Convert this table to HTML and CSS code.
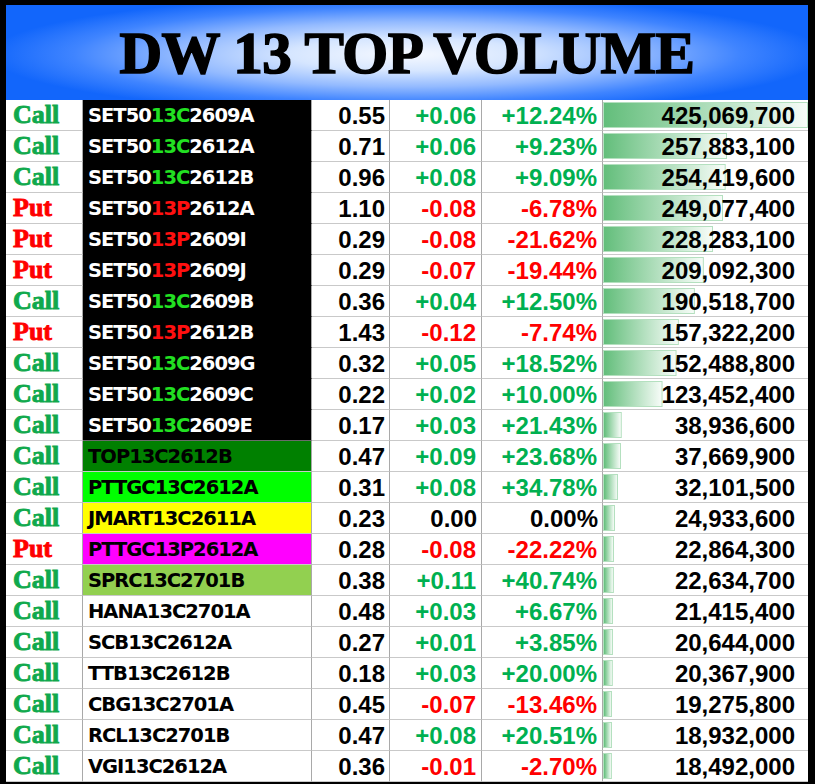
FILE: index.html
```html
<!DOCTYPE html>
<html>
<head>
<meta charset="utf-8">
<link rel="stylesheet" href="styles.css">
</head>
<body>
<div class="frame">
  <div class="header"><h1 class="title">DW 13 TOP VOLUME</h1></div>
  <div class="table">
    <div class="c type call">Call</div><div class="c name set">SET50<span class="g">13C</span>2609A</div><div class="c num">0.55</div><div class="c num up">+0.06</div><div class="c num up">+12.24%</div><div class="c vol" style="--w:100%">425,069,700</div>
    <div class="c type call">Call</div><div class="c name set">SET50<span class="g">13C</span>2612A</div><div class="c num">0.71</div><div class="c num up">+0.06</div><div class="c num up">+9.23%</div><div class="c vol" style="--w:60.67%">257,883,100</div>
    <div class="c type call">Call</div><div class="c name set">SET50<span class="g">13C</span>2612B</div><div class="c num">0.96</div><div class="c num up">+0.08</div><div class="c num up">+9.09%</div><div class="c vol" style="--w:59.85%">254,419,600</div>
    <div class="c type put">Put</div><div class="c name set">SET50<span class="r">13P</span>2612A</div><div class="c num">1.10</div><div class="c num dn">-0.08</div><div class="c num dn">-6.78%</div><div class="c vol" style="--w:58.6%">249,077,400</div>
    <div class="c type put">Put</div><div class="c name set">SET50<span class="r">13P</span>2609I</div><div class="c num">0.29</div><div class="c num dn">-0.08</div><div class="c num dn">-21.62%</div><div class="c vol" style="--w:53.7%">228,283,100</div>
    <div class="c type put">Put</div><div class="c name set">SET50<span class="r">13P</span>2609J</div><div class="c num">0.29</div><div class="c num dn">-0.07</div><div class="c num dn">-19.44%</div><div class="c vol" style="--w:49.19%">209,092,300</div>
    <div class="c type call">Call</div><div class="c name set">SET50<span class="g">13C</span>2609B</div><div class="c num">0.36</div><div class="c num up">+0.04</div><div class="c num up">+12.50%</div><div class="c vol" style="--w:44.82%">190,518,700</div>
    <div class="c type put">Put</div><div class="c name set">SET50<span class="r">13P</span>2612B</div><div class="c num">1.43</div><div class="c num dn">-0.12</div><div class="c num dn">-7.74%</div><div class="c vol" style="--w:37.01%">157,322,200</div>
    <div class="c type call">Call</div><div class="c name set">SET50<span class="g">13C</span>2609G</div><div class="c num">0.32</div><div class="c num up">+0.05</div><div class="c num up">+18.52%</div><div class="c vol" style="--w:35.87%">152,488,800</div>
    <div class="c type call">Call</div><div class="c name set">SET50<span class="g">13C</span>2609C</div><div class="c num">0.22</div><div class="c num up">+0.02</div><div class="c num up">+10.00%</div><div class="c vol" style="--w:29.04%">123,452,400</div>
    <div class="c type call">Call</div><div class="c name set last">SET50<span class="g">13C</span>2609E</div><div class="c num">0.17</div><div class="c num up">+0.03</div><div class="c num up">+21.43%</div><div class="c vol" style="--w:9.16%">38,936,600</div>
    <div class="c type call">Call</div><div class="c name dkgreen">TOP13C2612B</div><div class="c num">0.47</div><div class="c num up">+0.09</div><div class="c num up">+23.68%</div><div class="c vol" style="--w:8.86%">37,669,900</div>
    <div class="c type call">Call</div><div class="c name lime">PTTGC13C2612A</div><div class="c num">0.31</div><div class="c num up">+0.08</div><div class="c num up">+34.78%</div><div class="c vol" style="--w:7.55%">32,101,500</div>
    <div class="c type call">Call</div><div class="c name yellow">JMART13C2611A</div><div class="c num">0.23</div><div class="c num">0.00</div><div class="c num">0.00%</div><div class="c vol" style="--w:5.87%">24,933,600</div>
    <div class="c type put">Put</div><div class="c name magenta">PTTGC13P2612A</div><div class="c num">0.28</div><div class="c num dn">-0.08</div><div class="c num dn">-22.22%</div><div class="c vol" style="--w:5.38%">22,864,300</div>
    <div class="c type call">Call</div><div class="c name ltgreen">SPRC13C2701B</div><div class="c num">0.38</div><div class="c num up">+0.11</div><div class="c num up">+40.74%</div><div class="c vol" style="--w:5.32%">22,634,700</div>
    <div class="c type call">Call</div><div class="c name">HANA13C2701A</div><div class="c num">0.48</div><div class="c num up">+0.03</div><div class="c num up">+6.67%</div><div class="c vol" style="--w:5.04%">21,415,400</div>
    <div class="c type call">Call</div><div class="c name">SCB13C2612A</div><div class="c num">0.27</div><div class="c num up">+0.01</div><div class="c num up">+3.85%</div><div class="c vol" style="--w:4.86%">20,644,000</div>
    <div class="c type call">Call</div><div class="c name">TTB13C2612B</div><div class="c num">0.18</div><div class="c num up">+0.03</div><div class="c num up">+20.00%</div><div class="c vol" style="--w:4.79%">20,367,900</div>
    <div class="c type call">Call</div><div class="c name">CBG13C2701A</div><div class="c num">0.45</div><div class="c num dn">-0.07</div><div class="c num dn">-13.46%</div><div class="c vol" style="--w:4.53%">19,275,800</div>
    <div class="c type call">Call</div><div class="c name">RCL13C2701B</div><div class="c num">0.47</div><div class="c num up">+0.08</div><div class="c num up">+20.51%</div><div class="c vol" style="--w:4.45%">18,932,000</div>
    <div class="c type call">Call</div><div class="c name">VGI13C2612A</div><div class="c num">0.36</div><div class="c num dn">-0.01</div><div class="c num dn">-2.70%</div><div class="c vol" style="--w:4.35%">18,492,000</div>
  </div>
</div>
</body>
</html>
```

FILE: styles.css
```css
* { box-sizing: border-box; }
html, body { margin: 0; padding: 0; background: #000; }
.frame {
  width: 815px;
  height: 784px;
  padding: 5px 7px 7px 6px;
  background: #000;
  display: flex;
  flex-direction: column;
}
.header {
  height: 95px;
  flex: none;
  display: flex;
  align-items: center;
  justify-content: center;
  background: radial-gradient(ellipse 52% 62% at 50% 52%, #f6f9ff 0%, #d6e6ff 28%, #93baff 55%, #3f84ff 80%, #1266fb 100%);
}
.title {
  margin: 0;
  font-family: "Liberation Serif", "Times New Roman", serif;
  font-weight: 700;
  font-size: 59px;
  line-height: 1;
  color: #000;
  -webkit-text-stroke: 1.6px #000;
  letter-spacing: -0.5px;
  padding-top: 1px;
}
.table {
  flex: 1;
  display: grid;
  grid-template-columns: 77px 229px 78px 92px 121px 205px;
  grid-template-rows: repeat(22, 1fr);
  background: #fff;
}
.c {
  display: flex;
  align-items: center;
  border-right: 1px solid #a9a9a9;
  border-bottom: 1px solid #c9c9c9;
  background: #fff;
  color: #000;
  white-space: nowrap;
  overflow: hidden;
}
.type {
  padding-left: 7px;
  font-family: "Liberation Serif", "Times New Roman", serif;
  font-weight: 700;
  font-size: 26px;
  -webkit-text-stroke: 0.9px currentColor;
}
.call { color: #0fa94c; }
.put { color: #ff0000; }
.name {
  padding-left: 5px;
  font-family: "DejaVu Sans", Verdana, sans-serif;
  font-weight: 700;
  font-size: 19.5px;
  letter-spacing: -1px;
  padding-top: 1px;
}
.set { background: #000; color: #fff; border-bottom-color: #000; }
.set.last { border-bottom-color: #6a6a6a; }
.g { color: #22e022; }
.r { color: #ff1010; }
.dkgreen { background: #008000; }
.lime { background: #00ff00; }
.yellow { background: #ffff00; }
.magenta { background: #ff00ff; }
.ltgreen { background: #92d050; }
.num {
  justify-content: flex-end;
  padding-right: 4px;
  padding-top: 2px;
  font-family: "Liberation Sans", Arial, sans-serif;
  font-weight: 700;
  font-size: 24px;
}
.up { color: #00b050; padding-right: 5px; }
.dn { color: #ff0000; padding-right: 5px; }
.vol {
  justify-content: flex-end;
  padding-right: 13px;
  padding-top: 2px;
  border-right: none;
  font-family: "Liberation Sans", Arial, sans-serif;
  font-weight: 700;
  font-size: 24px;
  background-color: #fff;
  background-image: linear-gradient(90deg, #63be7b, #f7fcf8), linear-gradient(#b4e0bf, #b4e0bf);
  background-size: calc(var(--w) - 2px) calc(100% - 6px), var(--w) calc(100% - 4px);
  background-position: 1px 3px, 0 2px;
  background-repeat: no-repeat;
}
```
